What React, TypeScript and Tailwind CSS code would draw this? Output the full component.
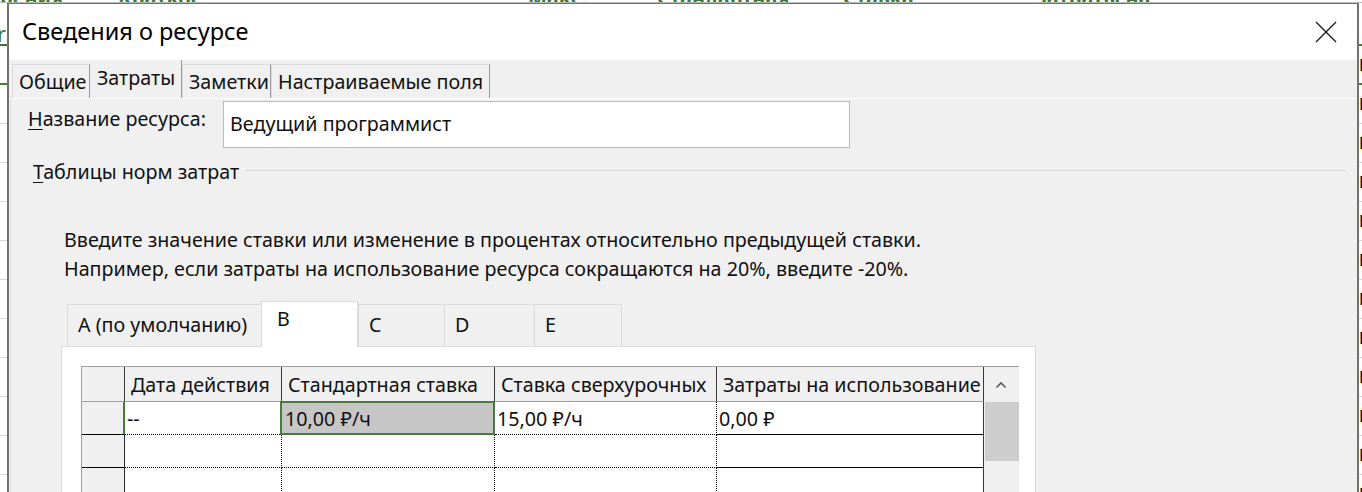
import type { ReactNode } from 'react';

const FONT = "font-['Noto_Sans','Liberation_Sans',sans-serif]";

function CloseIcon() {
  return (
    <svg width="22" height="22" viewBox="0 0 22 22" fill="none" stroke="#1b1b1b" strokeWidth="1.4">
      <path d="M1 1 L21 21 M21 1 L1 21" />
    </svg>
  );
}

function Chevron() {
  return (
    <svg width="12" height="8" viewBox="0 0 12 8" fill="none" stroke="#5a5a5a" strokeWidth="1.6">
      <path d="M1.5 6.5 L6 2 L10.5 6.5" />
    </svg>
  );
}

function Backdrop() {
  const rows = Array.from({ length: 12 });
  return (
    <div className="absolute inset-0 bg-white">
      {/* header labels of the spreadsheet behind the dialog, only their bottom shows */}
      <div className="flex h-[3px] overflow-hidden border-b border-[#b8b8b8] text-[20px] font-bold leading-[12px] text-[#3f7a34]">
        <span className="w-[118px] shrink-0 -translate-y-[8px]">рения</span>
        <span className="w-[410px] shrink-0 -translate-y-[8px]">Краткое</span>
        <span className="w-[129px] shrink-0 -translate-y-[8px]">Макс.</span>
        <span className="w-[186px] shrink-0 -translate-y-[8px]">Стандартная</span>
        <span className="w-[192px] shrink-0 -translate-y-[8px]">Ставка</span>
        <span className="shrink-0 -translate-y-[8px]">Затраты на</span>
      </div>
      <div className="absolute left-0 top-[3px] flex w-[7px] flex-col overflow-hidden">
        <div className="flex h-[43px] items-end border-b-2 border-[#4a7a3a] text-[22px] leading-[22px] text-[#3f7a34]">
          <span className="-ml-[3px] underline">r</span>
        </div>
        <div className="h-[39px] border-b-2 border-[#4a7a3a]" />
        {rows.map((_, i) => (
          <div key={i} className="h-[39px] border-b border-[#d6d6d6]" />
        ))}
      </div>
      <div className="absolute right-0 top-[3px] flex w-[3px] flex-col overflow-hidden">
        <div className="h-[43px] border-b-2 border-[#4a7a3a]" />
        <div className="flex h-[39px] items-center border-b-2 border-[#4a7a3a] text-[16px] text-black">Б</div>
        {rows.map((_, i) => (
          <div key={i} className="flex h-[39px] items-center border-b border-[#d6d6d6] text-[16px] text-black">
            Б
          </div>
        ))}
      </div>
    </div>
  );
}

function PageTab({ label, width, active }: { label: string; width: number; active?: boolean }) {
  return (
    <div
      style={{ width }}
      className={
        active
          ? 'flex h-[38px] shrink-0 items-center whitespace-nowrap border-r border-r-[#9c9c9c] bg-[#f0f0f0] pl-[7px] pb-[3px]'
          : 'flex h-[34px] shrink-0 items-center whitespace-nowrap border-l border-t border-r border-l-[#dcdcdc] border-t-[#dcdcdc] border-r-[#9c9c9c] bg-[#f0f0f0] pl-[6px]'
      }
    >
      {label}
    </div>
  );
}

function RateTab({ label, width, active }: { label: string; width: number; active?: boolean }) {
  return (
    <div
      style={{ width }}
      className={
        active
          ? 'relative z-10 -mb-px flex h-[46px] shrink-0 items-start border border-b-0 border-[#dcdcdc] bg-white pl-[15px] pt-[7px]'
          : 'flex h-[42px] shrink-0 items-center whitespace-nowrap border-l border-t border-[#dcdcdc] bg-[#f0f0f0] pl-[10px] pb-[2px] last:border-r'
      }
    >
      {label}
    </div>
  );
}

function Head({ children }: { children?: ReactNode }) {
  return (
    <div className="flex items-center overflow-hidden whitespace-nowrap border-b border-r border-b-[#a0a0a0] border-r-[#3a3a3a] bg-[#f0f0f0] pl-[6px] pt-[2px]">
      {children}
    </div>
  );
}

function RowHead({ selected }: { selected?: boolean }) {
  return (
    <div
      className={
        'border-b border-b-black bg-[#f0f0f0] ' +
        (selected ? 'border-r-2 border-r-[#4a7a3a]' : 'border-r border-r-[#2a2a2a]')
      }
    />
  );
}

function Cell({ children, last, selected }: { children?: ReactNode; last?: boolean; selected?: boolean }) {
  if (selected) {
    return (
      <div className="relative flex items-center border-b border-r border-dotted border-black bg-[#c6c6c6] pl-[3px] pt-[2px]">
        <div className="absolute -left-[2px] -top-[1px] bottom-[-1px] right-[-1px] border-2 border-[#4b7a40]" />
        <span className="relative">{children}</span>
      </div>
    );
  }
  return (
    <div
      className={
        'flex items-center whitespace-nowrap border-b border-dotted border-b-black pl-[2px] pt-[2px] ' +
        (last ? 'border-r border-solid border-r-[#3a3a3a]' : 'border-r border-r-black')
      }
    >
      {children}
    </div>
  );
}

export default function App() {
  return (
    <div className={`relative h-[492px] w-[1362px] overflow-hidden text-[19.7px] leading-none text-[#111] ${FONT}`}>
      <Backdrop />

      {/* dialog window */}
      <div className="absolute left-[7px] top-[3px] flex h-[520px] w-[1352px] flex-col border-x-2 border-t border-[#727272] bg-[#f0f0f0]">
        {/* title bar */}
        <div className="flex h-[56px] shrink-0 items-center justify-between bg-white pl-[13px] pr-[20px]">
          <span className="text-[23.5px] text-black">Сведения о ресурсе</span>
          <CloseIcon />
        </div>

        {/* page tabs */}
        <div className="flex h-[38px] shrink-0 items-end pl-[3px]">
          <PageTab label="Общие" width={78} />
          <PageTab label="Затраты" width={92} active />
          <PageTab label="Заметки" width={89} />
          <PageTab label="Настраиваемые поля" width={219} />
        </div>

        {/* tab page */}
        <div className="mx-px flex flex-1 flex-col border-l border-t border-l-[#e2e2e2] border-t-white">
          <div className="mt-[2px] flex items-start">
            <label className="w-[212px] shrink-0 pl-[17px] pt-[8px]">
              <span className="underline underline-offset-[3px]">Н</span>азвание ресурса:
            </label>
            <div className="flex h-[47px] w-[627px] items-center border border-[#b9b9b9] bg-white pl-[6px] pb-[2px]">
              Ведущий программист
            </div>
          </div>

          <div className="mt-[12px] flex h-[24px] items-center pl-[22px] pr-[10px]">
            <span className="shrink-0">
              <span className="underline underline-offset-[3px]">Т</span>аблицы норм затрат
            </span>
            <div className="ml-[6px] h-px flex-1 -translate-y-[2px] bg-[#d9d9d9]" />
          </div>

          <div className="mt-[41px] pl-[53px] leading-[29px]">
            <p>Введите значение ставки или изменение в процентах относительно предыдущей ставки.</p>
            <p>Например, если затраты на использование ресурса сокращаются на 20%, введите -20%.</p>
          </div>

          {/* rate table tabs */}
          <div className="ml-[56px] mt-[18px] flex h-[45px] items-end">
            <RateTab label="A (по умолчанию)" width={194} />
            <RateTab label="B" width={97} active />
            <RateTab label="C" width={86} />
            <RateTab label="D" width={90} />
            <RateTab label="E" width={88} />
          </div>

          <div className="ml-[50px] h-[200px] w-[975px] border border-[#dcdcdc] bg-white pl-[19px] pt-[19px]">
            <div className="grid w-[938px] grid-cols-[43px_157px_213px_222px_267px_35px] grid-rows-[35px_33px_33px_33px] border-l border-t border-[#a0a0a0]">
              <Head />
              <Head>Дата действия</Head>
              <Head>Стандартная ставка</Head>
              <Head>Ставка сверхурочных</Head>
              <Head>Затраты на использование</Head>
              <div className="flex items-center justify-center bg-[#f0f0f0] pr-[1px]">
                <Chevron />
              </div>

              <RowHead selected />
              <Cell>--</Cell>
              <Cell selected>10,00 ₽/ч</Cell>
              <Cell>15,00 ₽/ч</Cell>
              <Cell last>0,00 ₽</Cell>
              <div className="col-start-6 row-span-3 row-start-2 bg-[#f0f0f0] pl-px">
                <div className="h-[59px] bg-[#cdcdcd]" />
              </div>

              <RowHead />
              <Cell />
              <Cell />
              <Cell />
              <Cell last />

              <RowHead />
              <Cell />
              <Cell />
              <Cell />
              <Cell last />
            </div>
          </div>
        </div>
      </div>
    </div>
  );
}
